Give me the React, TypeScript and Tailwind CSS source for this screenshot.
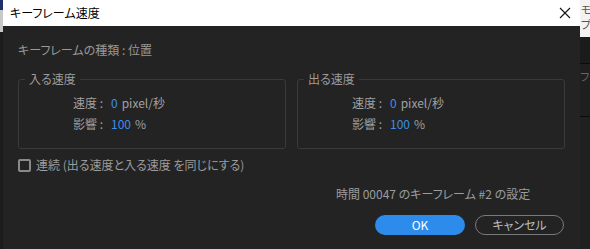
import React from 'react';

const font = "font-['Yu_Gothic_UI','Noto_Sans_CJK_JP',sans-serif] [font-feature-settings:'palt']";

const SpeedBox = ({ title }: { title: string }) => (
  <fieldset className="flex-1 border border-[#3a3a3a] rounded-[3px] h-[78px]">
    <legend className="ml-[6px] px-[4px] text-[12px] leading-[16px] text-[#9c9c9c]">{title}</legend>
    <div className="flex flex-col gap-[5px] pt-[8px] pl-[54px] text-[12px] leading-[16px]">
      <div className="flex items-center">
        <span className="text-[#a0a0a0] w-[38px]">速度 :</span>
        <span className="text-[#3d8ee6]">0</span>
        <span className="text-[#a0a0a0] ml-[4px]">pixel/秒</span>
      </div>
      <div className="flex items-center">
        <span className="text-[#a0a0a0] w-[38px]">影響 :</span>
        <span className="text-[#3d8ee6]">100</span>
        <span className="text-[#a0a0a0] ml-[4px]">%</span>
      </div>
    </div>
  </fieldset>
);

export default function App() {
  return (
    <div className={`w-[590px] h-[249px] flex overflow-hidden bg-[#1e1e1e] ${font}`}>
      {/* window behind, left */}
      <div className="w-[3px] flex flex-col">
        <div className="h-[10px] bg-[#20306a]" />
        <div className="h-[22px] bg-[#c8c8c8]" />
        <div className="flex-1 bg-[#1c1c1c]" />
      </div>

      {/* dialog */}
      <div className="w-[577px] flex flex-col bg-[#232323]">
        <div className="h-[26px] bg-white flex items-center justify-between pl-[7px] pr-[9px]">
          <span className="text-[12px] text-black">キーフレーム速度</span>
          <svg width="12" height="12" viewBox="0 0 12 12">
            <path d="M1 1L11 11M11 1L1 11" stroke="#111" strokeWidth="1.1" />
          </svg>
        </div>

        <div className="flex flex-col px-[15px] pt-[16px]">
          <div className="text-[12px] leading-[16px] text-[#999999]">キーフレームの種類 : 位置</div>

          <div className="flex gap-[11px] mt-[13px]">
            <SpeedBox title="入る速度" />
            <SpeedBox title="出る速度" />
          </div>

          <label className="flex items-center gap-[5px] mt-[8px]">
            <span className="w-[13px] h-[13px] border-2 border-[#8a8a8a] rounded-[2px]" />
            <span className="text-[12px] leading-[16px] text-[#9c9c9c]">連続 (出る速度と入る速度 を同じにする)</span>
          </label>

          <div className="pl-[318px] mt-[13px] text-[12px] leading-[16px] text-[#9c9c9c]">
            時間 00047 のキーフレーム #2 の設定
          </div>

          <div className="flex justify-end gap-[10px] mt-[13px] pr-[1px]">
            <button className="w-[90px] h-[20px] rounded-full bg-[#2d8ceb] text-white text-[12px] leading-none">OK</button>
            <button className="w-[89px] h-[20px] rounded-full border border-[#7a7a7a] text-[#bdbdbd] text-[12px] leading-none">キャンセル</button>
          </div>
        </div>
      </div>

      {/* window behind, right */}
      <div className="w-[10px] flex flex-col">
        <div className="h-[37px] bg-[#f2f2f2] flex flex-col gap-[2px] pl-[1px] text-[11px] leading-[13px] text-[#555] overflow-hidden whitespace-nowrap pt-[3px]">
          <span>モ</span>
          <span>プ</span>
        </div>
        <div className="h-[26px] bg-[#1b1b1b]" />
        <div className="h-px bg-[#0c0c0c]" />
        <div className="h-[52px] bg-[#1f1f1f] text-[11px] text-[#666] pt-[4px] overflow-hidden whitespace-nowrap">フ</div>
        <div className="h-px bg-[#0a0a0a]" />
        <div className="flex-1 bg-[#202020]" />
      </div>
    </div>
  );
}
